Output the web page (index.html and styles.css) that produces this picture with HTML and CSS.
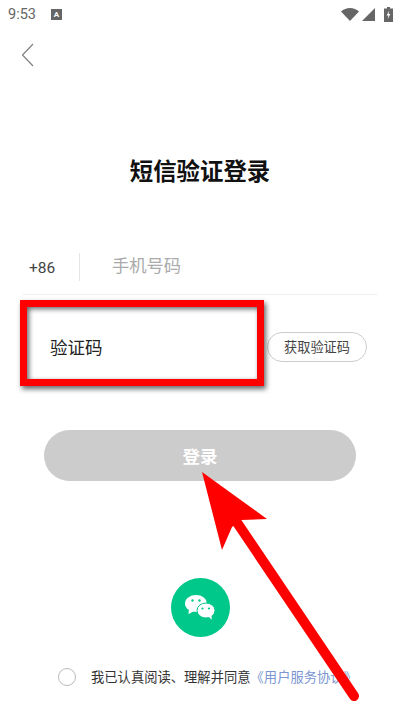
FILE: index.html
```html
<!DOCTYPE html>
<html lang="en">
<head>
    <meta charset="UTF-8">
    <meta name="viewport" content="width=device-width, initial-scale=1.0">
    <title>短信验证登录</title>
    <link rel="stylesheet" href="styles.css">
</head>
<body>

    <div class="page">
        <!-- Status bar -->
        <div class="status-bar">
            <span class="time">9:53</span>
            <span class="status-a">A</span>
            <span class="status-right">
                <svg width="18" height="13" viewBox="0 0 18 13"><path d="M0 3.500C2.500 1.200 5.600 0 9 0s6.500 1.200 9 3.500L9 13z" fill="#666"/></svg>
                <svg class="signal" width="13" height="13" viewBox="0 0 13 13"><path d="M13 0v13H0z" fill="#666"/></svg>
                <svg class="battery" width="9" height="15" viewBox="0 0 9 15"><path d="M3 0h3v1.500h3V15H0V1.500h3z" fill="#666"/><path d="M5.300 3.500L2.600 8.500h1.800L3.700 12l2.700-5H4.600z" fill="#fff"/></svg>
            </span>
        </div>

        <!-- Back -->
        <div class="nav">
            <svg width="13" height="24" viewBox="0 0 13 24"><path d="M12 1L1.500 12 12 23" fill="none" stroke="#808080" stroke-width="1.200"/></svg>
        </div>

        <h1>短信验证登录</h1>

        <form class="login-form" onsubmit="return false">
            <div class="phone-row">
                <span class="area-code">+86</span>
                <span class="divider"></span>
                <span class="phone-input">手机号码</span>
            </div>
            <div class="code-row">
                <span class="code-input">验证码</span>
                <button type="button" class="get-code">获取验证码</button>
            </div>
            <button type="submit" class="login-btn">登录</button>
        </form>

        <!-- WeChat login -->
        <div class="wechat">
            <svg width="30" height="25" viewBox="0 0 30 25">
                <ellipse cx="11" cy="8.500" rx="11" ry="8.500" fill="#fff"/>
                <path d="M4 14l-.6 5.200L9 16z" fill="#fff"/>
                <circle cx="7.500" cy="5.500" r="1.200" fill="#00c78a"/>
                <circle cx="14.500" cy="5.500" r="1.200" fill="#00c78a"/>
                <ellipse cx="21" cy="15.500" rx="9" ry="7.500" fill="#fff" stroke="#00c78a" stroke-width="1"/>
                <path d="M23.500 21.500l3.300 3.300-.4-4.500z" fill="#fff"/>
                <circle cx="17.500" cy="13.500" r="1.100" fill="#00c78a"/>
                <circle cx="24" cy="13.500" r="1.100" fill="#00c78a"/>
            </svg>
        </div>

        <div class="agree">
            <span class="agree-check"></span>
            <span class="agree-text">我已认真阅读、理解并同意<a class="agree-link">《用户服务协议》</a></span>
        </div>

        <!-- Annotations drawn on top of the screenshot -->
        <div class="mark-box"></div>
        <svg class="mark-arrow" width="400" height="712" viewBox="0 0 400 712">
            <path d="M236 521L354 696" fill="none" stroke="#f00" stroke-width="10" stroke-linecap="round"/>
            <path d="M202 472L267 519 241 520 232 527 222 550z" fill="#f00"/>
        </svg>
    </div>

</body>
</html>
```

FILE: styles.css
```css
/* Base */
body {
    margin: 0;
    background-color: #fff;
    font-family: "Noto Sans CJK SC", "Liberation Sans", sans-serif;
    color: #333;
}

.page {
    position: relative;
    width: 400px;
    height: 712px;
    overflow: hidden;
    display: flex;
    flex-direction: column;
}

/* Status bar */
.status-bar {
    height: 28px;
    display: flex;
    align-items: center;
    padding: 0 7px 0 8px;
    color: #666;
}

.time {
    font-family: Roboto, sans-serif;
    font-size: 14.500px;
}

.status-a {
    width: 11px;
    height: 11px;
    margin-left: 15px;
    background-color: #666;
    color: #fff;
    font: bold 8px/11px Roboto, sans-serif;
    text-align: center;
}

.status-right {
    margin-left: auto;
    display: flex;
    align-items: center;
}

.signal {
    margin-left: 3px;
}

.battery {
    margin-left: 9px;
}

/* Back */
.nav {
    height: 24px;
    padding: 15px 0 0 21px;
}

/* Title */
h1 {
    margin: 86px 0 0;
    height: 34px;
    font-size: 23.400px;
    line-height: 34px;
    font-weight: bold;
    color: #111;
    text-align: center;
}

/* Form */
.login-form {
    margin-top: 51px;
    display: flex;
    flex-direction: column;
}

.phone-row {
    height: 53px;
    margin: 0 23px;
    padding-top: 3px;
    display: flex;
    align-items: center;
    border-bottom: 1px solid #eee;
}

.area-code {
    width: 50px;
    padding-left: 6px;
    font-family: Roboto, sans-serif;
    font-size: 15.500px;
    color: #444;
}

.divider {
    width: 1px;
    height: 28px;
    margin-bottom: 1px;
    background-color: #e4e4e4;
}

.phone-input {
    margin-left: 32px;
    margin-bottom: 6px;
    font-size: 17.300px;
    color: #aaa;
}

.code-row {
    height: 103px;
    padding: 0 33px 0 50px;
    display: flex;
    align-items: center;
    justify-content: space-between;
}

.code-input {
    font-size: 17.500px;
    color: #222;
}

.get-code {
    width: 100px;
    height: 30px;
    padding: 0;
    background-color: #fff;
    border: 1px solid #ccc;
    border-radius: 15px;
    font-family: inherit;
    font-size: 13.200px;
    color: #444;
}

.login-btn {
    margin: 32px 44px 0;
    height: 51px;
    padding: 0;
    background-color: #ccc;
    border: none;
    border-radius: 26px;
    font-family: inherit;
    font-size: 17.500px;
    font-weight: bold;
    color: #fff;
}

/* WeChat */
.wechat {
    width: 59px;
    height: 59px;
    margin: 97px auto 0;
    border-radius: 50%;
    background-color: #00c78a;
    display: flex;
    align-items: center;
    justify-content: center;
}

/* Agreement */
.agree {
    margin-top: 30px;
    padding-left: 58px;
    display: flex;
    align-items: center;
}

.agree-check {
    width: 16px;
    height: 16px;
    border: 1px solid #bbb;
    border-radius: 50%;
}

.agree-text {
    margin-left: 15px;
    font-size: 13.300px;
    color: #333;
    white-space: nowrap;
}

.agree-link {
    color: #7b96d0;
}

/* Annotations */
.mark-box {
    position: absolute;
    left: 20px;
    top: 300px;
    width: 230px;
    height: 72px;
    border: 7px solid #f00;
    box-shadow: 2px 3px 5px rgba(0, 0, 0, 0.6), inset 2px 2px 5px rgba(0, 0, 0, 0.6);
}

.mark-arrow {
    position: absolute;
    left: 0;
    top: 0;
}
```
